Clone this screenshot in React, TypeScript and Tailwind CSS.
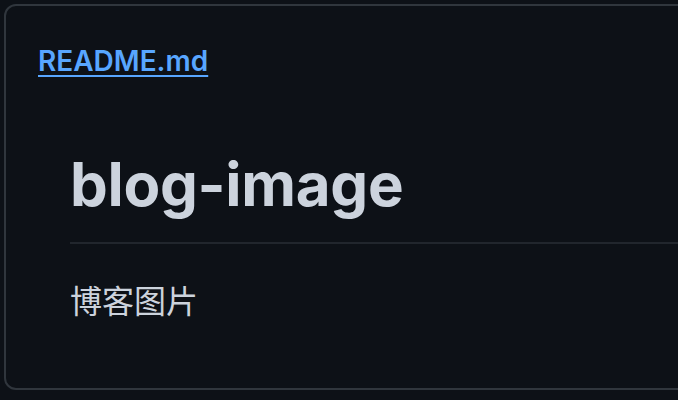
import React from "react";

export default function App() {
  return (
    <div className="w-[678px] h-[400px] overflow-hidden bg-[#0d1117] pt-[4px] pl-[4px]" style={{ fontFamily: 'Inter, "Noto Sans CJK SC", sans-serif' }}>
      <div className="w-[720px] h-[386px] border-2 border-[#30363d] rounded-[12px]">
        <div className="px-[32px] pt-[35px] h-[80px]">
          <a href="#" className="text-[28px] leading-[40px] font-semibold text-[#58a6ff] underline underline-offset-[4px] decoration-2">README.md</a>
        </div>
        <div className="pl-[64px] pt-[60px]">
          <h1 className="text-[60px] leading-[76px] font-bold text-[#ccd3dd] tracking-[-0.3px] pb-[20px] border-b-2 border-[#21262d]">blog-image</h1>
          <p className="mt-[35px] text-[32px] leading-[40px] text-[#ccd3dd]" style={{ fontFamily: '"Noto Sans CJK SC", sans-serif' }}>博客图片</p>
        </div>
      </div>
    </div>
  );
}
